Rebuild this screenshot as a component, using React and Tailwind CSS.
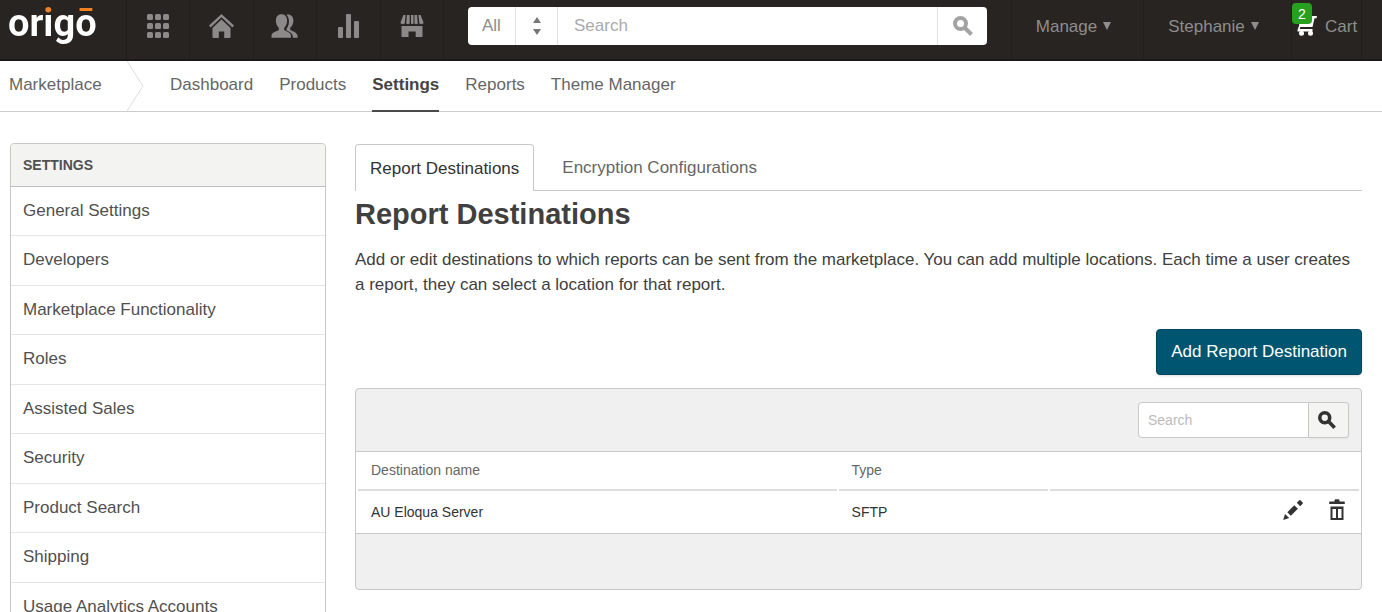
import React, { useState } from 'react';

const sidebarItems = [
    'General Settings',
    'Developers',
    'Marketplace Functionality',
    'Roles',
    'Assisted Sales',
    'Security',
    'Product Search',
    'Shipping',
    'Usage Analytics Accounts'
];

const subNavItems = ['Dashboard', 'Products', 'Settings', 'Reports', 'Theme Manager'];

const destinations = [{ name: 'AU Eloqua Server', type: 'SFTP' }];

const GridIcon = () => (
    <svg width="22" height="24" viewBox="0 0 22 24" fill="currentColor" aria-hidden="true">
        {[0, 9, 18].map((y) =>
            [0, 8, 16].map((x) => <rect key={`${x}-${y}`} x={x} y={y} width="6" height="6" rx="1.5" />)
        )}
    </svg>
);

const HomeIcon = () => (
    <svg width="25" height="24" viewBox="0 0 25 24" fill="currentColor" aria-hidden="true">
        <path d="M12.5 0 25 11.6l-1.6 1.8L12.5 3.3 1.6 13.4 0 11.6z" />
        <path d="M12.5 5.6 21.5 14v9q0 1-1 1h-5.3v-6.4h-5.4V24H4.5q-1 0-1-1v-9z" />
    </svg>
);

const UsersIcon = () => (
    <svg width="27" height="24" viewBox="0 0 27 24" fill="currentColor" aria-hidden="true">
        <path d="M10.5.3c3.6 0 5.6 2.6 5.6 6.4 0 3-1.2 5.6-2.9 7.1v2.3c1.5 1.3 6.2 2 6.7 5.2l.2 2.500H.4l.2-2.500c.3-3.200 5.700-3.900 7.200-5.200v-2.300C6.100 12.300 4.900 9.700 4.900 6.700c0-3.800 2-6.400 5.600-6.400z" />
        <path d="M15.400.6c4-1 7 1.600 7 5.900 0 3-1.300 5.800-3.200 7.300v1.900c1.600 1.500 6.600 2.300 7.200 5.500l.4 2.600h-4.900c0-3.900-1.500-5.100-6.400-7.600v-1.500c2.800-3.300 3.800-9.600-.1-14.100z" />
    </svg>
);

const ChartIcon = () => (
    <svg width="21" height="24" viewBox="0 0 21 24" fill="currentColor" aria-hidden="true">
        <rect x="0" y="13" width="5" height="11" rx="1" />
        <rect x="8" y="0" width="5" height="24" rx="1" />
        <rect x="16" y="7" width="5" height="17" rx="1" />
    </svg>
);

const StoreIcon = () => (
    <svg width="24" height="24" viewBox="0 0 24 24" fill="currentColor" aria-hidden="true">
        <path d="M3.400 1h2.200L4.800 9.500Q2.400 11 .3 9z" />
        <path d="M7 1h2.700v8.500q-1.700 1.300-3.500 0z" />
        <path d="M11 1h2.500v8.500q-1.200 1-2.500 0z" />
        <path d="M14.500 1h2.500l.8 8.500q-1.600 1.300-3.300 0z" />
        <path d="M18.400 1h2.200l3.100 8q-2 2-4.300.5z" />
        <path d="M1.500 12h21v10.500q0 .5-.5.5h-6.300v-5.500H8.500V23H2q-.5 0-.5-.5z" />
    </svg>
);

const SearchIcon = ({ size }) => (
    <svg width={size} height={size} viewBox="0 0 20 20" fill="none" stroke="currentColor" aria-hidden="true">
        <circle cx="7.500" cy="7.500" r="5.500" strokeWidth="4" />
        <path d="M11.500 11.500l7 7" strokeWidth="4" />
    </svg>
);

const CaretIcon = () => (
    <svg width="8" height="8" viewBox="0 0 8 8" fill="currentColor" aria-hidden="true">
        <path d="M0 0h8L4 8z" />
    </svg>
);

const CartIcon = () => (
    <svg width="20" height="20" viewBox="0 0 20 20" fill="currentColor" aria-hidden="true">
        <path d="M14.500 0H20l-.5 2.200h-2L15.500 11H3.300l-.6 2h12.800v2.500H.5V14L2.300 9 1 4h14z" />
        <circle cx="4.500" cy="17.300" r="2.500" />
        <circle cx="13.500" cy="17.300" r="2.500" />
    </svg>
);

const PencilIcon = () => (
    <svg width="20" height="20" viewBox="0 0 20 20" fill="currentColor" aria-hidden="true">
        <path d="M.2 20 2 14l4.200 4z" />
        <path d="M4.300 12.200 11.300 5.200l3.600 3.600-7 7z" />
        <path d="M13.800 2.800 16.300.3q.6-.5 1.200 0L19.600 2.500q.5.600 0 1.200L17.200 6.200z" />
    </svg>
);

const TrashIcon = () => (
    <svg width="16" height="22" viewBox="0 0 16 22" fill="currentColor" aria-hidden="true">
        <path d="M5.500 1.200Q5.700.3 6.700.3h2.600q1 0 1.200.9l.1 1.300h4.600q.6 0 .6.600v1.900H.2V3.100q0-.6.6-.6h4.600z" />
        <path fillRule="evenodd" d="M1.500 7.500h13V21h-13zM3.500 10v9H7v-9zm5.500 0v9h3.500v-9z" />
    </svg>
);

const navIcons = [
    { label: 'Apps', Icon: GridIcon },
    { label: 'Home', Icon: HomeIcon },
    { label: 'Users', Icon: UsersIcon },
    { label: 'Reports', Icon: ChartIcon },
    { label: 'Store', Icon: StoreIcon }
];

const Header = () => {
    const [query, setQuery] = useState('');

    return (
        <header className="flex h-[61px] bg-[#282421] border-b-2 border-[#1b1817] text-[17px] text-[#8f8d8b]">
            <a href="#" className="flex items-start w-[126px] shrink-0 pl-2">
                <span className="leading-[46px] pb-1 font-['Roboto',sans-serif] font-bold text-[38px] text-transparent bg-clip-text bg-[linear-gradient(#f58220_13px,#ffffff_13px)]">
                    origō
                </span>
            </a>
            <nav className="grid grid-cols-5 w-[318px] shrink-0 border-r border-[#211e1b]">
                {navIcons.map(({ label, Icon }) => (
                    <a key={label} href="#" aria-label={label} className="flex justify-center pt-[14px] border-l border-[#211e1b] text-[#8b8a88]">
                        <Icon />
                    </a>
                ))}
            </nav>

            <div className="flex-1 min-w-0 px-6 pt-[7px]">
                <form className="flex h-[38px] bg-white rounded overflow-hidden" onSubmit={(e) => e.preventDefault()}>
                    <div className="relative w-[90px] shrink-0">
                        <select aria-label="Search category" className="appearance-none w-full h-full pl-[14px] text-[#8c8c8c] border-r border-[#e0e0e0]">
                            <option>All</option>
                        </select>
                        <div className="absolute right-0 top-0 w-[43px] h-full flex items-center justify-center border-l border-[#e0e0e0] text-[#777777] pointer-events-none">
                            <svg width="8" height="18" viewBox="0 0 8 18" fill="currentColor" aria-hidden="true">
                                <path d="M4 0l4 6H0zM4 18l4-6H0z" />
                            </svg>
                        </div>
                    </div>
                    <input
                        type="text"
                        aria-label="Search marketplace"
                        placeholder="Search"
                        className="flex-1 min-w-0 px-4 text-[#555555] placeholder:text-[#aaaaaa] outline-none"
                        value={query}
                        onChange={(e) => setQuery(e.target.value)}
                    />
                    <button type="submit" aria-label="Search" className="flex items-center justify-center w-[50px] border-l border-[#e0e0e0] text-[#a3a3a3]">
                        <SearchIcon size={20} />
                    </button>
                </form>
            </div>

            <div className="flex shrink-0 mr-5 border-r border-[#211e1b] leading-[53px]">
                <button type="button" className="flex items-start justify-center gap-[6px] w-[132px] pr-2 border-l border-[#211e1b]">
                    Manage
                    <span className="pt-[22px] leading-none"><CaretIcon /></span>
                </button>
                <button type="button" className="flex items-start justify-center gap-[6px] w-[148px] pr-2 border-l border-[#211e1b]">
                    Stephanie
                    <span className="pt-[22px] leading-none"><CaretIcon /></span>
                </button>
                <a href="#" className="relative flex items-start gap-2 w-[70px] pl-[5px] border-l border-[#211e1b]">
                    <span className="pt-4 text-white"><CartIcon /></span>
                    Cart
                    <span className="absolute left-0 top-[3px] w-5 h-[21px] rounded-sm bg-[#27a01f] text-white text-[14px] leading-[22px] text-center">
                        2
                    </span>
                </a>
            </div>
        </header>
    );
};

const SubNav = () => (
    <nav className="flex h-[51px] pl-[9px] border-b border-[#cccccc] text-[17px] leading-[48px] text-[#666666]">
        <a href="#" className="w-[118px]">Marketplace</a>
        <svg width="17" height="50" viewBox="0 0 17 50" fill="none" stroke="#dddddd" aria-hidden="true">
            <path d="M0 0l16 25L0 50" />
        </svg>
        <div className="flex gap-[26px] pl-[26px]">
            {subNavItems.map((item) => (
                <a
                    key={item}
                    href="#"
                    className={item === 'Settings' ? 'h-[51px] font-bold text-[#444444] border-b-2 border-[#4a4a4a]' : ''}
                >
                    {item}
                </a>
            ))}
        </div>
    </nav>
);

const Sidebar = () => (
    <aside className="w-[316px] shrink-0 border border-[#c8c8c8] rounded-t">
        <h2 className="h-[43px] px-3 bg-[#f3f3f2] border-b border-[#c0c0c0] rounded-t text-[14px] leading-[43px] font-bold text-[#505050]">
            SETTINGS
        </h2>
        <ul>
            {sidebarItems.map((item) => (
                <li key={item} className="odd:h-[49px] even:h-[50px] border-b border-[#e5e5e5]">
                    <a href="#" className="block px-3 text-[17px] leading-[48px] text-[#505050]">{item}</a>
                </li>
            ))}
        </ul>
    </aside>
);

const DestinationsTable = () => {
    const [filter, setFilter] = useState('');

    return (
        <section className="mt-[13px] border border-[#c8c8c8] rounded bg-[#f0f0f0] text-[14px]">
            <div className="flex justify-end h-[63px] pt-[13px] pr-3 border-b border-[#c8c8c8]">
                <form className="flex h-9" onSubmit={(e) => e.preventDefault()}>
                    <input
                        type="text"
                        aria-label="Search destinations"
                        placeholder="Search"
                        className="w-[171px] px-[9px] bg-white border border-[#c8c8c8] rounded-l text-[#444444] placeholder:text-[#bbbbbb] outline-none"
                        value={filter}
                        onChange={(e) => setFilter(e.target.value)}
                    />
                    <button type="submit" aria-label="Search" className="flex items-center justify-center w-10 pr-1 bg-[#f4f4f3] border border-l-0 border-[#c8c8c8] rounded-r shadow-xs text-[#333333]">
                        <SearchIcon size={18} />
                    </button>
                </form>
            </div>
            <div className="bg-white border-b border-[#c8c8c8]">
                <table className="w-full table-fixed border-separate border-spacing-x-[2px] border-spacing-y-0 text-left">
                    <colgroup>
                        <col className="w-[48%]" />
                        <col className="w-[21%]" />
                        <col />
                    </colgroup>
                    <thead>
                        <tr className="h-[39px] text-[#666666]">
                            <th scope="col" className="pl-[13px] border-b-2 border-[#dddddd] font-normal">Destination name</th>
                            <th scope="col" className="pl-[13px] border-b-2 border-[#dddddd] font-normal">Type</th>
                            <td className="border-b-2 border-[#dddddd]"></td>
                        </tr>
                    </thead>
                    <tbody>
                        {destinations.map((row) => (
                            <tr key={row.name} className="h-[42px] text-[#333333]">
                                <td className="pl-[13px]">{row.name}</td>
                                <td className="pl-[13px]">{row.type}</td>
                                <td className="pr-[14px]">
                                    <div className="flex items-center justify-end gap-[26px] pb-1">
                                        <button type="button" aria-label={`Edit ${row.name}`}><PencilIcon /></button>
                                        <button type="button" aria-label={`Delete ${row.name}`}><TrashIcon /></button>
                                    </div>
                                </td>
                            </tr>
                        ))}
                    </tbody>
                </table>
            </div>
            <div className="h-[55px]"></div>
        </section>
    );
};

const App = () => (
    <div className="min-h-screen bg-white font-['Liberation_Sans',Arial,sans-serif]">
        <Header />
        <SubNav />
        <div className="flex items-start gap-[29px] pl-[10px] pr-5 pt-[31px]">
            <Sidebar />
            <main className="flex-1 min-w-0 pt-px">
                <div className="flex text-[17px] leading-[45px]">
                    <button type="button" className="h-[47px] px-[14px] border border-b-0 border-[#c8c8c8] rounded-t text-[#333333]">
                        Report Destinations
                    </button>
                    <button type="button" className="h-[47px] px-7 border-b border-[#c8c8c8] text-[#666666]">
                        Encryption Configurations
                    </button>
                    <div className="flex-1 border-b border-[#c8c8c8]"></div>
                </div>
                <h1 className="pt-[7px] text-[29px] leading-8 font-bold text-[#404040]">Report Destinations</h1>
                <p className="pt-[17px] text-[17px] leading-[25px] text-[#404040]">
                    Add or edit destinations to which reports can be sent from the marketplace. You can add multiple locations. Each time a user creates a report, they can select a location for that report.
                </p>
                <div className="flex justify-end pt-8">
                    <button type="button" className="h-[46px] px-[14px] bg-[#005670] border border-[#00485e] rounded shadow-sm text-[17px] text-white">
                        Add Report Destination
                    </button>
                </div>
                <DestinationsTable />
            </main>
        </div>
    </div>
);

export default App;
